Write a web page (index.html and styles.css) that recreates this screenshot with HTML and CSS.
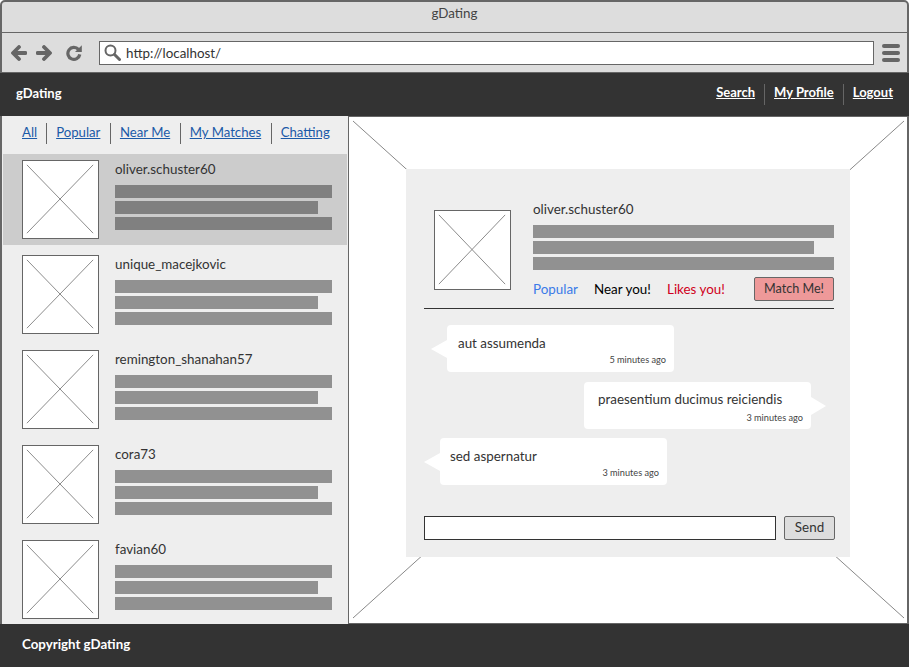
FILE: index.html
```html
<!DOCTYPE html>
<html lang="en">
<head>
    <meta charset="UTF-8">
    <title>gDating</title>
    <link rel="stylesheet" href="styles.css">
</head>
<body>
<div class="window">
    <!-- browser chrome -->
    <div class="chrome">
        <div class="chrome-title">gDating</div>
        <div class="toolbar">
            <svg class="tool-icon" width="16" height="16" viewBox="0 0 16 16"><path d="M8 2 L2 8 L8 14 M2.5 8 H14.5" fill="none" stroke="#666" stroke-width="3.8" stroke-linejoin="round" stroke-linecap="round"/></svg>
            <svg class="tool-icon" width="16" height="16" viewBox="0 0 16 16"><path d="M8 2 L14 8 L8 14 M13.5 8 H1.5" fill="none" stroke="#666" stroke-width="3.8" stroke-linejoin="round" stroke-linecap="round"/></svg>
            <svg class="tool-icon tool-reload" width="16" height="16" viewBox="0 0 16 16"><path d="M12.4 4.4 A6 6 0 1 0 13.8 9.4" fill="none" stroke="#666" stroke-width="3.2"/><path d="M9 7 L15.8 7 L15.8 0.2 Z" fill="#666"/></svg>
            <div class="url-bar">
                <svg width="17" height="17" viewBox="0 0 17 17"><circle cx="6.5" cy="6.5" r="5" fill="none" stroke="#666" stroke-width="2"/><path d="M10.5 10.5 L15.5 15.5" stroke="#666" stroke-width="3" stroke-linecap="round"/></svg>
                <span>http://localhost/</span>
            </div>
            <div class="menu-icon"><i></i><i></i><i></i></div>
        </div>
    </div>

    <!-- site nav -->
    <div class="navbar">
        <div class="brand">gDating</div>
        <div class="nav-links">
            <a href="#">Search</a>
            <a href="#">My Profile</a>
            <a href="#">Logout</a>
        </div>
    </div>

    <div class="content">
        <div class="sidebar">
            <div class="filters">
                <a href="#">All</a>
                <a href="#">Popular</a>
                <a href="#">Near Me</a>
                <a href="#">My Matches</a>
                <a href="#">Chatting</a>
            </div>

            <div class="user-row selected">
                <svg class="thumb" viewBox="0 0 77 80" preserveAspectRatio="none"><path d="M4 4 L72 75 M72 4 L4 75"/></svg>
                <div class="user-info">
                    <div class="user-name">oliver.schuster60</div>
                    <div class="bar"></div>
                    <div class="bar short"></div>
                    <div class="bar"></div>
                </div>
            </div>
            <div class="user-row">
                <svg class="thumb" viewBox="0 0 77 80" preserveAspectRatio="none"><path d="M4 4 L72 75 M72 4 L4 75"/></svg>
                <div class="user-info">
                    <div class="user-name">unique_macejkovic</div>
                    <div class="bar"></div>
                    <div class="bar short"></div>
                    <div class="bar"></div>
                </div>
            </div>
            <div class="user-row">
                <svg class="thumb" viewBox="0 0 77 80" preserveAspectRatio="none"><path d="M4 4 L72 75 M72 4 L4 75"/></svg>
                <div class="user-info">
                    <div class="user-name">remington_shanahan57</div>
                    <div class="bar"></div>
                    <div class="bar short"></div>
                    <div class="bar"></div>
                </div>
            </div>
            <div class="user-row">
                <svg class="thumb" viewBox="0 0 77 80" preserveAspectRatio="none"><path d="M4 4 L72 75 M72 4 L4 75"/></svg>
                <div class="user-info">
                    <div class="user-name">cora73</div>
                    <div class="bar"></div>
                    <div class="bar short"></div>
                    <div class="bar"></div>
                </div>
            </div>
            <div class="user-row">
                <svg class="thumb" viewBox="0 0 77 80" preserveAspectRatio="none"><path d="M4 4 L72 75 M72 4 L4 75"/></svg>
                <div class="user-info">
                    <div class="user-name">favian60</div>
                    <div class="bar"></div>
                    <div class="bar short"></div>
                    <div class="bar"></div>
                </div>
            </div>
        </div>

        <div class="main">
            <svg class="main-cross" viewBox="0 0 558 506" preserveAspectRatio="none"><path d="M4 4 L555 501 M555 4 L4 501"/></svg>

            <div class="card">
                <div class="profile">
                    <svg class="thumb" viewBox="0 0 77 80" preserveAspectRatio="none"><path d="M4 4 L72 75 M72 4 L4 75"/></svg>
                    <div class="profile-info">
                        <div class="user-name">oliver.schuster60</div>
                        <div class="bar"></div>
                        <div class="bar wide-short"></div>
                        <div class="bar"></div>
                        <div class="tags">
                            <span class="tag-popular">Popular</span>
                            <span class="tag-near">Near you!</span>
                            <span class="tag-likes">Likes you!</span>
                            <button class="match-btn" type="button">Match Me!</button>
                        </div>
                    </div>
                </div>
                <div class="divider"></div>

                <div class="messages">
                    <div class="bubble left first">
                        <div class="bubble-text">aut assumenda</div>
                        <div class="bubble-time">5 minutes ago</div>
                    </div>
                    <div class="bubble right">
                        <div class="bubble-text">praesentium ducimus reiciendis</div>
                        <div class="bubble-time">3 minutes ago</div>
                    </div>
                    <div class="bubble left">
                        <div class="bubble-text">sed aspernatur</div>
                        <div class="bubble-time">3 minutes ago</div>
                    </div>
                </div>

                <div class="send-row">
                    <input class="send-input" type="text">
                    <button class="send-btn" type="button">Send</button>
                </div>
            </div>
        </div>
    </div>

    <div class="footer">Copyright gDating</div>
</div>
</body>
</html>
```

FILE: styles.css
```css
* {
    box-sizing: border-box;
}

body {
    margin: 0;
    font-family: "Lato", "Noto Sans", sans-serif;
    font-size: 13.4px;
    color: #333;
    background-color: #fff;
}

a {
    color: inherit;
}

.window {
    display: flex;
    flex-direction: column;
    width: 909px;
    height: 667px;
    overflow: hidden;
}

/* browser chrome */
.chrome {
    height: 73px;
    border: 2px solid #666;
    border-bottom-width: 1px;
    border-top-right-radius: 5px;
    border-top-left-radius: 5px;
    background-color: #ddd;
}

.chrome-title {
    height: 31px;
    border-bottom: 1px solid #666;
    line-height: 23px;
    text-align: center;
    color: #444;
}

.toolbar {
    display: flex;
    align-items: center;
    height: 39px;
    padding-left: 9px;
}

.tool-icon {
    margin-right: 9px;
}

.tool-reload {
    margin-left: 5px;
    margin-right: 17px;
}

.url-bar {
    display: flex;
    align-items: center;
    gap: 5px;
    width: 775px;
    height: 24px;
    padding-left: 4px;
    border: 1px solid #666;
    background-color: #fff;
    color: #333;
}

.menu-icon {
    display: flex;
    flex-direction: column;
    gap: 3px;
    margin-left: 8px;
}

.menu-icon i {
    display: block;
    width: 18px;
    height: 4px;
    border-radius: 2px;
    background-color: #666;
}

/* site nav */
.navbar {
    display: flex;
    justify-content: space-between;
    align-items: center;
    height: 43px;
    padding: 0 16px;
    background-color: #333;
    color: #fff;
    font-weight: 700;
    font-size: 13px;
}

.brand {
    margin-bottom: 3px;
}

.nav-links {
    display: flex;
}

.nav-links a {
    padding: 0 9px 4px;
    line-height: 17px;
    border-right: 1px solid #666;
}

.nav-links a:last-child {
    padding-right: 0;
    border-right: none;
}

/* content */
.content {
    flex: 1;
    display: flex;
    min-height: 0;
}

.sidebar {
    width: 349px;
    border-left: 2px solid #666;
    border-right: 1px solid #666;
    background-color: #eee;
    overflow: hidden;
}

.filters {
    display: flex;
    align-items: center;
    height: 38px;
    padding: 0 0 3px 20px;
    color: #1b5aa8;
    font-size: 13.2px;
    white-space: nowrap;
}

.filters a {
    padding: 0 9.5px 3px 9px;
    line-height: 18px;
    border-right: 1px solid #666;
}

.filters a:first-child {
    padding-left: 0;
    padding-right: 9px;
}

.filters a:last-child {
    border-right: none;
}

.user-row {
    display: flex;
    gap: 16px;
    height: 91px;
    margin: 0 1px 4px;
    padding: 6px 15px 0 19px;
}

.user-row.selected {
    background-color: #ccc;
}

.user-row.selected .bar {
    background-color: #808080;
}

.thumb {
    flex: none;
    width: 77px;
    height: 79px;
    border: 1px solid #666;
    background-color: #fff;
}

.thumb path,
.main-cross path {
    fill: none;
    stroke: #888;
    stroke-width: 1;
}

.user-info {
    flex: 1;
}

.user-name {
    height: 18px;
    margin-bottom: 7px;
    line-height: 18px;
    color: #333;
}

.bar {
    height: 13px;
    margin-bottom: 3px;
    background-color: #919191;
}

.bar.short {
    width: 203px;
}

.bar.wide-short {
    width: 281px;
}

/* main panel */
.main {
    flex: 1;
    position: relative;
    border-top: 1px solid #666;
    border-right: 2px solid #666;
    border-bottom: 1px solid #666;
    padding: 52px 57px 0;
    background-color: #fff;
}

.main-cross {
    position: absolute;
    top: 0;
    left: 0;
    width: 100%;
    height: 100%;
}

.card {
    position: relative;
    height: 388px;
    padding: 31px 16px 0 18px;
    background-color: #eee;
}

.profile {
    display: flex;
    gap: 22px;
    padding-left: 10px;
}

.profile .thumb {
    height: 80px;
    margin-top: 10px;
}

.profile-info {
    flex: 1;
}

.tags {
    display: flex;
    align-items: center;
    height: 24px;
    margin-top: 7px;
}

.tag-popular {
    width: 61px;
    color: #3a7ae8;
}

.tag-near {
    width: 73px;
    color: #000;
}

.tag-likes {
    color: #d00020;
}

.match-btn {
    width: 80px;
    height: 24px;
    margin-left: auto;
    padding: 0 0 2px;
    border: 1px solid #666;
    border-radius: 2px;
    background-color: #e99;
    color: #333;
    font: inherit;
    font-size: 12.6px;
}

.divider {
    height: 1px;
    margin-top: 7px;
    background-color: #333;
}

.messages {
    display: flex;
    flex-direction: column;
    gap: 9px;
    margin-top: 16px;
}

.bubble {
    position: relative;
    width: 227px;
    height: 47px;
    padding: 10px 8px 0 10px;
    border-radius: 4px;
    background-color: #fff;
}

.bubble::before {
    content: "";
    position: absolute;
    top: 15px;
    border-top: 9px solid transparent;
    border-bottom: 9px solid transparent;
}

.bubble.left {
    margin-left: 16px;
}

.bubble.left::before {
    left: -16px;
    border-right: 16px solid #fff;
}

.bubble.first {
    margin-left: 23px;
    margin-bottom: 1px;
    padding-left: 11px;
}

.bubble.right {
    align-self: flex-end;
    margin-right: 23px;
    padding-top: 9px;
    padding-left: 14px;
}

.bubble.right::before {
    right: -15px;
    border-left: 15px solid #fff;
}

.bubble-text {
    line-height: 17px;
    color: #333;
}

.bubble-time {
    margin-top: 1px;
    line-height: 13px;
    text-align: right;
    font-size: 9.2px;
    color: #444;
}

.bubble.right .bubble-time {
    margin-top: 3px;
}

.send-row {
    display: flex;
    gap: 8px;
    margin-top: 31px;
    margin-right: -1px;
}

.send-input {
    width: 352px;
    height: 24px;
    border: 1px solid #333;
    background-color: #fff;
}

.send-btn {
    width: 51px;
    height: 24px;
    padding: 0 0 2px;
    border: 1px solid #666;
    border-radius: 2px;
    background-color: #ddd;
    color: #333;
    font: inherit;
}

.footer {
    height: 43px;
    padding-left: 22px;
    background-color: #333;
    line-height: 41px;
    font-weight: 700;
    font-size: 13.3px;
    color: #fff;
}
```
